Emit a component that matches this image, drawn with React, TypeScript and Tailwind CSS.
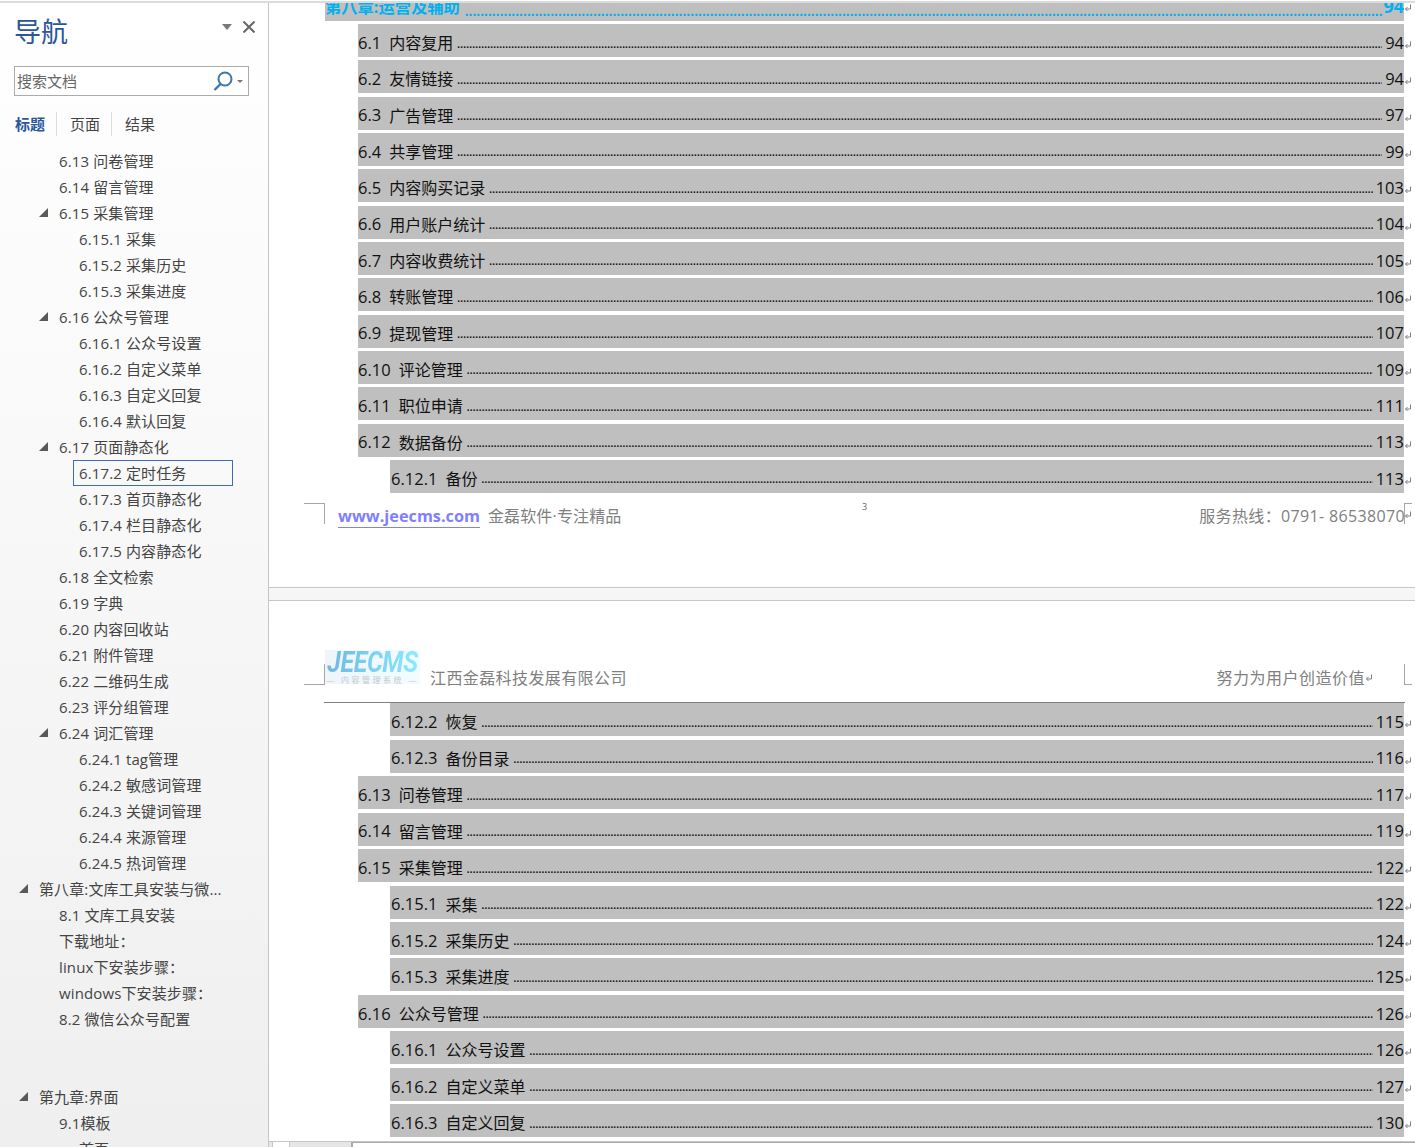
const navItems: [string, number, boolean?][] = [
  ['6.13 问卷管理', 1],
  ['6.14 留言管理', 1],
  ['6.15 采集管理', 1, true],
  ['6.15.1 采集', 2],
  ['6.15.2 采集历史', 2],
  ['6.15.3 采集进度', 2],
  ['6.16 公众号管理', 1, true],
  ['6.16.1 公众号设置', 2],
  ['6.16.2 自定义菜单', 2],
  ['6.16.3 自定义回复', 2],
  ['6.16.4 默认回复', 2],
  ['6.17 页面静态化', 1, true],
  ['6.17.2 定时任务', 2],
  ['6.17.3 首页静态化', 2],
  ['6.17.4 栏目静态化', 2],
  ['6.17.5 内容静态化', 2],
  ['6.18 全文检索', 1],
  ['6.19 字典', 1],
  ['6.20 内容回收站', 1],
  ['6.21 附件管理', 1],
  ['6.22 二维码生成', 1],
  ['6.23 评分组管理', 1],
  ['6.24 词汇管理', 1, true],
  ['6.24.1 tag管理', 2],
  ['6.24.2 敏感词管理', 2],
  ['6.24.3 关键词管理', 2],
  ['6.24.4 来源管理', 2],
  ['6.24.5 热词管理', 2],
  ['第八章:文库工具安装与微...', 0, true],
  ['8.1 文库工具安装', 1],
  ['下载地址：', 1],
  ['linux下安装步骤：', 1],
  ['windows下安装步骤：', 1],
  ['8.2 微信公众号配置', 1],
];

const pageOne: [string, string, string, number][] = [
  ['6.1', '内容复用', '94', 1],
  ['6.2', '友情链接', '94', 1],
  ['6.3', '广告管理', '97', 1],
  ['6.4', '共享管理', '99', 1],
  ['6.5', '内容购买记录', '103', 1],
  ['6.6', '用户账户统计', '104', 1],
  ['6.7', '内容收费统计', '105', 1],
  ['6.8', '转账管理', '106', 1],
  ['6.9', '提现管理', '107', 1],
  ['6.10', '评论管理', '109', 1],
  ['6.11', '职位申请', '111', 1],
  ['6.12', '数据备份', '113', 1],
  ['6.12.1', '备份', '113', 2],
];

const pageTwo: [string, string, string, number][] = [
  ['6.12.2', '恢复', '115', 2],
  ['6.12.3', '备份目录', '116', 2],
  ['6.13', '问卷管理', '117', 1],
  ['6.14', '留言管理', '119', 1],
  ['6.15', '采集管理', '122', 1],
  ['6.15.1', '采集', '122', 2],
  ['6.15.2', '采集历史', '124', 2],
  ['6.15.3', '采集进度', '125', 2],
  ['6.16', '公众号管理', '126', 1],
  ['6.16.1', '公众号设置', '126', 2],
  ['6.16.2', '自定义菜单', '127', 2],
  ['6.16.3', '自定义回复', '130', 2],
];

const DOTS = '.'.repeat(420);

// Word's paragraph mark
const ReturnMark = ({ className }: { className: string }) => (
  <svg className={className} viewBox="0 0 8 8" fill="none" stroke="#808080" strokeWidth="1">
    <path d="M6.5 0.5v4.5h-5M3.5 3L1.5 5l2 2" />
  </svg>
);

const NavRow = ({ label, level, open }: { label: string; level: number; open?: boolean }) => {
  const selected = label.startsWith('6.17.2');
  return (
    <div className={`relative flex h-[26px] items-center whitespace-nowrap tracking-[0.12px] ${level === 0 ? 'pl-[39px]' : level === 1 ? 'pl-[59px]' : 'pl-[79px]'}`}>
      {open && (
        <span
          className={`absolute top-[8px] h-0 w-0 border-b-[9px] border-l-[9px] border-b-[#595959] border-l-transparent ${level === 0 ? 'left-[19px]' : 'left-[39px]'}`}
        />
      )}
      {selected && <span className="absolute bottom-0 left-[73px] right-[35px] top-0 border border-[#3f6cb0]" />}
      <span className="relative">{label}</span>
    </div>
  );
};

const TocRow = ({ num, title, page, level, tight }: { num: string; title: string; page: string; level: number; tight?: boolean }) => (
  <div className={`${tight ? 'mb-[3.33px]' : 'mb-[3.46px]'} ${level === 1 ? 'ml-[358px]' : 'ml-[390px]'} mr-[11px]`}>
    <div className={`relative flex h-[33px] items-center whitespace-nowrap bg-[#bfbfbf] pt-[5px] text-[16.5px] leading-none text-[#111] ${level === 2 ? 'pl-[1px]' : ''}`}>
      <span>{num}</span>
      <span className="ml-[8px] text-[16px]">{title}</span>
      <span className="ml-[4px] mr-[3px] mt-[3px] min-w-0 flex-1 overflow-hidden font-['Liberation_Sans'] text-[10px] font-bold tracking-[0.22px]">{DOTS}</span>
      <span>{page}</span>
      <ReturnMark className="absolute right-[-8px] top-[17px] h-[8px] w-[8px]" />
    </div>
  </div>
);

export default function App() {
  return (
    <div className="flex h-[1147px] w-[1415px] flex-col overflow-hidden bg-white font-['Open_Sans','Noto_Sans_CJK_SC',sans-serif]">
      <div className="h-[3px] shrink-0 border-b-2 border-[#dcdcdc]" />
      <div className="flex min-h-0 flex-1">
        <aside className="flex w-[269px] shrink-0 flex-col overflow-hidden border-r border-[#c6c6c6] bg-gradient-to-b from-white to-[#efefef] text-[15px] text-[#444]">
          <div className="relative h-[63px] shrink-0">
            <h1 className="pl-[14px] pt-[10px] text-[27px] font-normal leading-[38px] text-[#2b579a]">导航</h1>
            <span className="absolute left-[222px] top-[21px] h-0 w-0 border-x-[5.5px] border-t-[6px] border-x-transparent border-t-[#7a7a7a]" />
            <svg className="absolute left-[243px] top-[18px] h-[12px] w-[12px]" viewBox="0 0 12 12" fill="none" stroke="#666" strokeWidth="2">
              <path d="M0.5 0.5l11 11M11.5 0.5l-11 11" />
            </svg>
          </div>
          <div className="mx-[14px] flex h-[30px] w-[235px] shrink-0 items-center border border-[#ababab] bg-white pl-[2px] text-[15px] text-[#666]">
            <span className="flex-1">搜索文档</span>
            <svg className="h-[20px] w-[20px]" viewBox="0 0 20 20" fill="none" stroke="#3f76b0" strokeWidth="2">
              <circle cx="12" cy="8" r="6.5" />
              <path d="M7.5 13l-6 6" strokeWidth="2.4" />
            </svg>
            <span className="ml-[4px] mr-[5px] h-0 w-0 border-x-[3px] border-t-[3px] border-x-transparent border-t-[#777]" />
          </div>
          <div className="ml-[15px] mt-[16px] flex h-[24px] shrink-0 items-center text-[15px]">
            <span className="w-[42px] border-r border-[#dcdcdc] font-bold leading-[24px] text-[#2b579a]">标题</span>
            <span className="w-[55px] border-r border-[#dcdcdc] pl-[13px] leading-[24px]">页面</span>
            <span className="pl-[13px] leading-[24px]">结果</span>
          </div>
          <div className="mt-[12px]">
            {navItems.map(([label, level, open]) => (
              <NavRow key={label} label={label} level={level} open={open} />
            ))}
            <div className="h-[52px]" />
            <NavRow label="第九章:界面" level={0} open />
            <NavRow label="9.1模板" level={1} />
            <NavRow label="首页" level={2} />
          </div>
        </aside>

        <main className="relative flex min-w-0 flex-1 flex-col overflow-hidden">
          <div className="flex-1 overflow-hidden [margin-left:-269px]">
            <div className="relative mb-[3px] ml-[325px] mr-[11px] h-[18px] bg-[#bfbfbf]">
              <div className="flex h-full items-center overflow-hidden whitespace-nowrap text-[16.25px] font-bold leading-none text-[#00b0f0]">
                <span className="-mt-[10px]">第八章:运营及辅助</span>
                <span className="ml-[5px] -mt-[3px] min-w-0 flex-1 overflow-hidden font-['Liberation_Sans'] text-[14px]">{DOTS}</span>
                <span className="-mt-[12px] text-[18px]">94</span>
              </div>
              <ReturnMark className="absolute right-[-8px] top-[1px] h-[8px] w-[8px]" />
            </div>
            {pageOne.map(([num, title, page, level]) => (
              <TocRow key={num} num={num} title={title} page={page} level={level} tight />
            ))}

            <div className="relative h-[91px]">
              <span className="absolute left-[304px] top-[7px] h-[21px] w-[21px] border-r border-t border-[#a6a6a6]" />
              <span className="absolute right-[3px] top-[7px] h-[21px] w-[8px] border-l border-t border-[#a6a6a6]" />
              <div className="flex items-center whitespace-nowrap pl-[338px] pr-[10px] pt-[8px] text-[16px] text-[#808080]">
                <a className="border-b border-[#7f7fff] text-[16.25px] font-bold leading-[22px] text-[#7f7fff]">www.jeecms.com</a>
                <span className="ml-[8px] tracking-[0.15px]">金磊软件·专注精品</span>
                <span className="ml-auto tracking-[0.35px]">服务热线：0791- 86538070</span>
              </div>
              <ReturnMark className="absolute right-[3px] top-[15px] h-[8px] w-[8px]" />
              <span className="absolute left-[862px] top-[4px] text-[9px] text-[#666]">3</span>
            </div>

            <div className="h-[14px] border-y border-[#c6c6c6] bg-[#f6f6f6]" />

            <div className="relative h-[102px]">
              <span className="absolute left-[304px] top-[63px] h-[21px] w-[21px] border-b border-r border-[#a6a6a6]" />
              <span className="absolute right-[3px] top-[63px] h-[21px] w-[8px] border-b border-l border-[#a6a6a6]" />
              <div className="absolute left-[325px] top-[49px] flex h-[34px] w-[95px] flex-col items-center overflow-hidden bg-gradient-to-r from-[#eef5fb] to-[#f2fcff]">
                <span className="h-[20px] origin-top scale-y-[1.2] bg-gradient-to-r from-[#6fb8e2] to-[#8aeaff] bg-clip-text font-['Roboto'] text-[25px] font-bold italic leading-[20px] tracking-[-0.4px] text-transparent">JEECMS</span>
                <span className="mt-[5px] whitespace-nowrap text-[8px] leading-[9px] tracking-[2.5px] text-[#c4c8cc]">— 内容管理系统 —</span>
              </div>
              <div className="absolute bottom-0 left-[324px] right-[10px] flex items-center whitespace-nowrap border-b border-[#808080] pb-[12px] pl-[106px] pr-[40px] text-[16px] text-[#808080]">
                <span className="tracking-[0.4px]">江西金磊科技发展有限公司</span>
                <span className="ml-auto tracking-[0.5px]">努力为用户创造价值</span>
              </div>
              <ReturnMark className="absolute right-[42px] top-[73px] h-[8px] w-[8px]" />
            </div>

            {pageTwo.map(([num, title, page, level]) => (
              <TocRow key={num} num={num} title={title} page={page} level={level} />
            ))}
          </div>
          <div className="absolute bottom-0 left-0 right-0 flex h-[6px] items-start border-t border-[#c6c6c6] bg-[#e6e6e6]">
            <span className="ml-[3px] h-full w-[18px] border-x border-[#c6c6c6] bg-white" />
            <span className="ml-[61px] h-full flex-1 border-l-2 border-t border-[#ababab] bg-white" />
          </div>
        </main>
      </div>
    </div>
  );
}
